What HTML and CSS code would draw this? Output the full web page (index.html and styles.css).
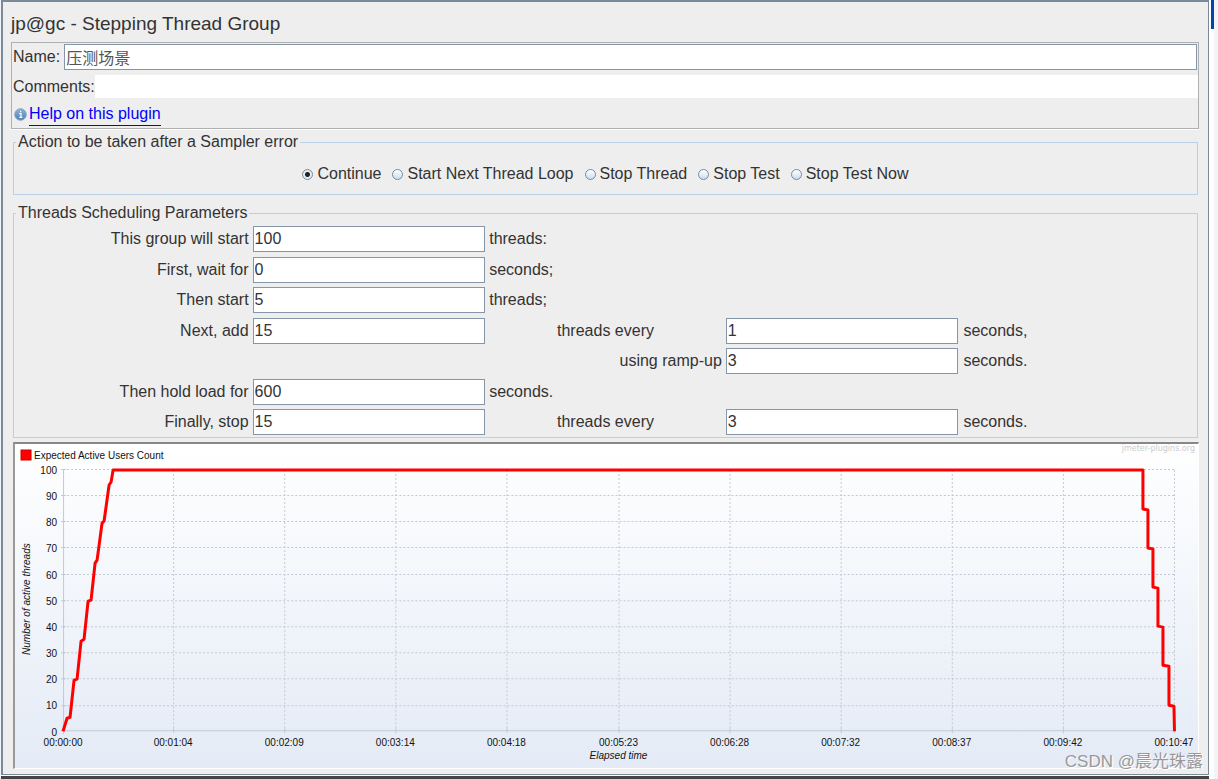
FILE: index.html
```html
<!DOCTYPE html>
<html lang="en">

<head>
    <meta charset="utf-8">
    <title>jp@gc - Stepping Thread Group</title>
    <link rel="stylesheet" href="styles.css">
</head>

<body>
    <div class="window">
        <h1>jp@gc - Stepping Thread Group</h1>

        <div class="header-panel">
            <div class="header-row name-row">
                <label for="name">Name:</label>
                <input type="text" id="name" class="text-field" value="压测场景">
            </div>
            <div class="header-row comments-row">
                <label for="comments">Comments:</label>
                <input type="text" id="comments">
            </div>
            <div class="header-row help-row">
                <svg class="info-icon" viewBox="0 0 13 13" aria-hidden="true">
                    <defs>
                        <linearGradient id="info" x1="0" y1="0" x2="0" y2="1">
                            <stop offset="0" stop-color="#8fb4d8" />
                            <stop offset="1" stop-color="#4a7fb5" />
                        </linearGradient>
                    </defs>
                    <circle cx="6.5" cy="6.5" r="5.8" fill="url(#info)" stroke="#8ba5c0" stroke-width="1" />
                    <path d="M5.2 5.6h1.8v3.6M5.2 9.4h3.2M6 3.6h1.2" fill="none" stroke="#fff" stroke-width="1.2" />
                </svg>
                <a href="#help">Help on this plugin</a>
            </div>
        </div>

        <fieldset class="error-action">
            <legend>Action to be taken after a Sampler error</legend>
            <div class="radios">
                <label><input type="radio" name="action" checked>Continue</label>
                <label><input type="radio" name="action">Start Next Thread Loop</label>
                <label><input type="radio" name="action">Stop Thread</label>
                <label><input type="radio" name="action">Stop Test</label>
                <label><input type="radio" name="action">Stop Test Now</label>
            </div>
        </fieldset>

        <fieldset class="scheduling">
            <legend>Threads Scheduling Parameters</legend>
            <div class="params">
                <label class="before" for="total">This group will start</label>
                <input type="text" id="total" class="text-field" value="100">
                <span class="after">threads:</span>

                <label class="before" for="wait">First, wait for</label>
                <input type="text" id="wait" class="text-field" value="0">
                <span class="after">seconds;</span>

                <label class="before" for="initial">Then start</label>
                <input type="text" id="initial" class="text-field" value="5">
                <span class="after">threads;</span>

                <label class="before" for="add">Next, add</label>
                <input type="text" id="add" class="text-field" value="15">
                <label class="middle" for="add-every">threads every</label>
                <input type="text" id="add-every" class="text-field" value="1">
                <span class="last">seconds,</span>

                <label class="ramp-label" for="ramp">using ramp-up</label>
                <input type="text" id="ramp" class="text-field" value="3">
                <span class="last">seconds.</span>

                <label class="before" for="hold">Then hold load for</label>
                <input type="text" id="hold" class="text-field" value="600">
                <span class="after">seconds.</span>

                <label class="before" for="stop">Finally, stop</label>
                <input type="text" id="stop" class="text-field" value="15">
                <label class="middle" for="stop-every">threads every</label>
                <input type="text" id="stop-every" class="text-field" value="3">
                <span class="last">seconds.</span>
            </div>
        </fieldset>

        <div class="chart">
            <svg viewBox="0 0 1182 324" role="img" aria-label="Expected Active Users Count">
                <rect x="6" y="6" width="10" height="10" fill="#f00" stroke="#c00" />
                <text class="legend-text" x="19" y="15">Expected Active Users Count</text>
                <text class="brand" x="1179" y="7">jmeter-plugins.org</text>

                <path class="grid" d="M48 25.500H1158M48 51.500H1158M48 77.500H1158M48 103.500H1158M48 130.500H1158M48 156.500H1158M48 182.500H1158M48 208.500H1158M48 234.500H1158M48 261.500H1158" />
                <path class="grid" d="M158.500 26V286M269.500 26V286M380.500 26V286M491.500 26V286M603.500 26V286M714.500 26V286M825.500 26V286M936.500 26V286M1047.500 26V286M1158.500 26V286" />
                <path class="axis" d="M48.500 25V290M46 286.500H1158M46 25.500h5M46 51.500h5M46 77.500h5M46 103.500h5M46 130.500h5M46 156.500h5M46 182.500h5M46 208.500h5M46 234.500h5M46 261.500h5" />
                <path class="axis" d="M158.500 284v5M269.500 284v5M380.500 284v5M491.500 284v5M603.500 284v5M714.500 284v5M825.500 284v5M936.500 284v5M1047.500 284v5M1158.500 284v5" />

                <g class="y-labels">
                    <text x="42" y="30">100</text>
                    <text x="42" y="56">90</text>
                    <text x="42" y="82">80</text>
                    <text x="42" y="108">70</text>
                    <text x="42" y="135">60</text>
                    <text x="42" y="161">50</text>
                    <text x="42" y="187">40</text>
                    <text x="42" y="213">30</text>
                    <text x="42" y="239">20</text>
                    <text x="42" y="265">10</text>
                    <text x="42" y="292">0</text>
                </g>
                <g class="x-labels">
                    <text x="48" y="302">00:00:00</text>
                    <text x="158" y="302">00:01:04</text>
                    <text x="269" y="302">00:02:09</text>
                    <text x="380" y="302">00:03:14</text>
                    <text x="491" y="302">00:04:18</text>
                    <text x="603" y="302">00:05:23</text>
                    <text x="714" y="302">00:06:28</text>
                    <text x="825" y="302">00:07:32</text>
                    <text x="936" y="302">00:08:37</text>
                    <text x="1047" y="302">00:09:42</text>
                    <text x="1158" y="302">00:10:47</text>
                </g>
                <text class="axis-title" x="603" y="315">Elapsed time</text>
                <text class="axis-title" transform="translate(15 155) rotate(-90)">Number of active threads</text>

                <polyline class="series" points="48,287 52,274 55,273 59,236 62,235 66,197 69,195 73,157 76,156 80,119 82,116 87,79 89,77 94,41 96,38 98,26 1127,26 1127,65 1132,66 1132,104 1137,105 1137,143 1142,144 1142,182 1147,183 1147,221 1153,222 1153,261 1158,262 1158.500,287" />
            </svg>
        </div>
    </div>

    <div class="scroll-track">
        <div class="scroll-thumb"></div>
    </div>

    <div class="watermark">CSDN @晨光珠露</div>
</body>

</html>
```
FILE: styles.css
```css
* {
    box-sizing: border-box;
}

body {
    margin: 0;
    display: flex;
    min-height: 100vh;
    background-color: #f3f4f8;
    color: #333333;
    font-family: "Liberation Sans", Arial, "Noto Sans CJK SC", sans-serif;
    font-size: 16px;
    line-height: 18px;
}

.window {
    flex: 1;
    min-width: 0;
    margin: 0 0 4px 1px;
    padding: 10px 9px 4px 8px;
    background-color: #eeeeee;
    border: 2px solid #7a8a99;
    border-right-width: 1px;
    border-bottom-width: 1px;
    box-shadow: 0 1px 0 #ffffff, 0 4px 0 #444444;
}

h1 {
    margin: 0 0 6px;
    font-size: 19px;
    line-height: 24px;
    font-weight: normal;
}

input {
    font: inherit;
    color: inherit;
    margin: 0;
}

.text-field {
    width: 100%;
    min-width: 0;
    height: 26px;
    padding: 0 1px;
    background-color: #ffffff;
    border: 1px solid #8496a8;
    border-radius: 0;
}

.header-panel {
    border: 1px solid #b0b0b0;
    box-shadow: 0 1px 0 #ffffff;
    padding: 1px 0 2px 1px;
}

.header-row {
    display: flex;
    align-items: center;
}

.name-row {
    gap: 4px;
    padding-right: 1px;
}

#name {
    color: #555555;
}

.comments-row {
    margin-top: 5px;
}

#comments {
    flex: 1;
    min-width: 0;
    height: 23px;
    padding: 0 2px;
    background-color: #ffffff;
    border: none;
}

.help-row {
    margin-top: 5px;
    gap: 2px;
    padding-left: 1px;
}

.info-icon {
    width: 13px;
    height: 13px;
}

.help-row a {
    color: #0000ff;
    text-decoration: none;
    border-bottom: 1px solid #0000ff;
    line-height: 22px;
}

fieldset {
    min-width: 0;
    margin: 0 1px 0 2px;
    padding: 0 2px;
    border: 1px solid #b8cfe5;
}

legend {
    padding: 0 2px;
}

.error-action {
    margin-top: 4px;
}

.radios {
    display: flex;
    flex-wrap: wrap;
    justify-content: center;
    gap: 11px;
    padding: 14px 0 11px;
}

.radios label {
    display: flex;
    align-items: center;
    gap: 4px;
}

.radios input {
    appearance: none;
    width: 11px;
    height: 11px;
    border: 1px solid #7a8a99;
    border-radius: 50%;
    background: linear-gradient(#ffffff, #c8ddf2);
}

.radios input:checked {
    background: radial-gradient(circle, #222222 2px, #e4edf6 3px);
}

.scheduling {
    margin-top: 9px;
}

/* label | field | text | field | text */
.params {
    display: grid;
    grid-template-columns: repeat(5, 1fr);
    column-gap: 4px;
    grid-auto-rows: 26px;
    align-content: space-between;
    align-items: center;
    min-height: 209px;
    margin: 4px 0 2px;
}

.before {
    grid-column: 1;
    text-align: right;
}

.after {
    grid-column: 3;
}

.last {
    padding-left: 1px;
}

.middle {
    text-align: center;
}

.ramp-label {
    grid-column: 3;
    text-align: right;
}

.chart {
    margin: 4px 0 0 2px;
    border: 2px solid;
    border-color: #888888 #ffffff #ffffff #999999;
    border-right-width: 1px;
    border-bottom-width: 1px;
    background: linear-gradient(#ffffff, #e4ebf6);
}

.chart svg {
    display: block;
    width: 100%;
    height: auto;
    font-size: 10px;
    fill: #111111;
}

.brand {
    font-family: "DejaVu Sans", sans-serif;
    font-size: 8px;
    fill: #cccccc;
    text-anchor: end;
}

.grid {
    fill: none;
    stroke: #c3c9d3;
    stroke-dasharray: 2 2;
}

.axis {
    fill: none;
    stroke: #c3c9d3;
}

.y-labels {
    text-anchor: end;
}

.x-labels {
    text-anchor: middle;
}

.axis-title {
    font-style: italic;
    text-anchor: middle;
}

.series {
    fill: none;
    stroke: #ff0000;
    stroke-width: 3px;
    stroke-linejoin: round;
}

.scroll-track {
    width: 5px;
    padding-left: 2px;
    margin-right: 4px;
    background-color: #ffffff;
}

.scroll-thumb {
    height: 29px;
    background-color: #0046b0;
}

.watermark {
    position: absolute;
    right: 15px;
    bottom: 5px;
    font-size: 17px;
    line-height: 24px;
    color: #999999;
    text-shadow: 1px 1px 0 #ffffff;
}
```
